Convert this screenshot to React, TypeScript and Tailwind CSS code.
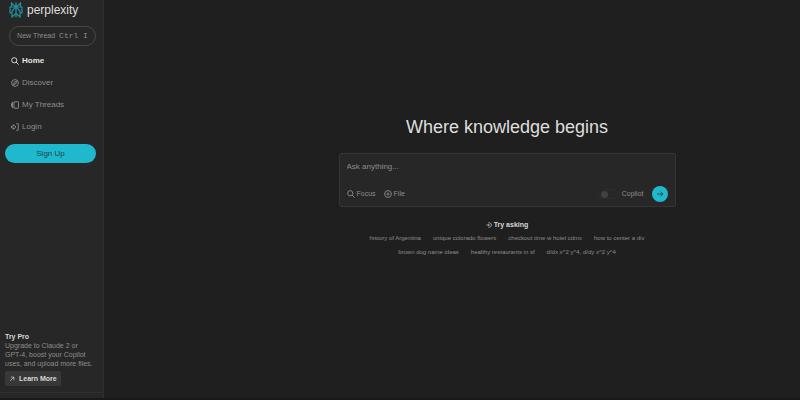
import React from 'react';

const navItems = [
  { label: 'Home', icon: 'search', active: true },
  { label: 'Discover', icon: 'compass', active: false },
  { label: 'My Threads', icon: 'threads', active: false },
  { label: 'Login', icon: 'login', active: false },
];

const suggestionRows = [
  ['history of Argentina', 'unique colorado flowers', 'checkout time w hotel cdmx', 'how to center a div'],
  ['brown dog name ideas', 'healthy restaurants in sf', 'd/dx x^2 y^4, d/dy x^2 y^4'],
];

const Icon: React.FC<{ name: string; className?: string }> = ({ name, className }) => (
  <svg
    viewBox="0 0 16 16"
    fill="none"
    stroke="currentColor"
    strokeWidth="1.8"
    className={className}
    aria-hidden="true"
  >
    {name === 'search' && (
      <>
        <circle cx="6.5" cy="6.5" r="5.2" />
        <path d="M10.2 10.2 15.2 15.2" />
      </>
    )}
    {name === 'compass' && (
      <>
        <circle cx="8" cy="8" r="6.8" />
        <path d="M11.4 4.6 9.5 9.5 4.6 11.4 6.5 6.5Z" />
      </>
    )}
    {name === 'threads' && (
      <>
        <rect x="6" y="1.5" width="9" height="13" rx="1" />
        <path d="M5 2.5H3v11h2M1 4.5v7" />
      </>
    )}
    {name === 'login' && (
      <>
        <path d="M10.5 1.5H14.5v13h-4" />
        <path d="M1 6h4V3.5L10 8l-5 4.5V10H1Z" />
      </>
    )}
    {name === 'plus' && (
      <>
        <circle cx="8" cy="8" r="6.8" />
        <path d="M8 5v6M5 8h6" />
      </>
    )}
    {name === 'ask' && (
      <>
        <path d="M6 2.5A6 6 0 1 1 6 13.5" />
        <path d="M1 8h8M6.5 5.5 9 8l-2.5 2.5" />
      </>
    )}
    {name === 'upRight' && <path d="M3 13 13 3M5 3h8v8" />}
    {name === 'right' && <path d="M2 8h12M9 3l5 5-5 5" />}
  </svg>
);

const Logo = () => (
  <svg viewBox="0 0 28 32" fill="none" stroke="#22909e" strokeWidth="2.4" className="h-4 w-3.5" aria-hidden="true">
    <path d="M14 1v30M14 10 5 2v8M14 10l9-8v8M14 10H2v12h4M14 10h12v12h-4" />
    <path d="m14 10-8 8v12l8-7M14 10l8 8v12l-8-7" />
  </svg>
);

const Sidebar = () => (
  <aside className="flex w-[104px] shrink-0 flex-col border-r border-[#303030] bg-[#272727]">
    <div className="flex flex-1 flex-col pr-[7px] pl-[5px]">
      <a href="#home" className="mt-0.5 flex items-center gap-1 pl-1 text-[#dededb]">
        <Logo />
        <span className="text-[12px] leading-4">perplexity</span>
      </a>

      <button className="mt-2 ml-1 flex h-5 items-center justify-center gap-1 rounded-full border border-[#484848] text-[7px] whitespace-nowrap text-[#8d8d8b]">
        New Thread
        <kbd className="font-['Liberation_Mono',monospace] text-[8px]">Ctrl I</kbd>
      </button>

      <nav className="mt-1 flex flex-col pl-1.5">
        {navItems.map((item) => (
          <a
            key={item.label}
            href="#"
            className={
              item.active
                ? 'flex h-[22px] items-center gap-[3px] text-[8px] font-semibold text-[#e4e4e1]'
                : 'flex h-[22px] items-center gap-[3px] text-[8px] text-[#8d8d8b]'
            }
          >
            <Icon name={item.icon} className="size-2" />
            {item.label}
          </a>
        ))}
      </nav>

      <button className="mt-1.5 h-[19px] rounded-full bg-[#20b8cd] text-[8px] text-[#17454c]">Sign Up</button>

      <section className="mt-auto pb-1.5 text-[7px] leading-[9px] text-[#8d8d8b]">
        <h2 className="font-semibold text-[#d8d8d5]">Try Pro</h2>
        <p>
          Upgrade to Claude 2 or
          <br />
          GPT-4, boost your Copilot
          <br />
          uses, and upload more files.
        </p>
        <button className="mt-[3px] flex h-[15px] items-center gap-1 rounded-xs bg-[#383838] px-1 font-semibold text-[#d8d8d5]">
          <Icon name="upRight" className="size-1.5" />
          Learn More
        </button>
      </section>
    </div>
    <div className="h-1.5 border-t border-[#303030]" />
  </aside>
);

const AskBox = () => (
  <form
    onSubmit={(e) => e.preventDefault()}
    className="mt-4 w-full max-w-[337px] rounded-xs border border-[#343434] bg-[#272727] px-[7px] pt-2 pb-1"
  >
    <input
      type="text"
      aria-label="Ask anything"
      placeholder="Ask anything..."
      className="block h-2.5 w-full bg-transparent text-[8px] text-[#dededb] outline-none placeholder:text-[#8d8d8b]"
    />
    <div className="mt-3.5 flex items-center text-[7px] text-[#8d8d8b]">
      <button type="button" className="flex items-center gap-0.5">
        <Icon name="search" className="size-2" />
        Focus
      </button>
      <button type="button" className="ml-2 flex items-center gap-0.5">
        <Icon name="plus" className="size-2" />
        File
      </button>
      <label className="ml-auto flex items-center gap-1">
        <input type="checkbox" className="peer sr-only" />
        <span className="flex h-2.5 w-5 items-center rounded-full border border-[#2d2d2d] px-0.5">
          <span className="size-[7px] rounded-full bg-[#404040]" />
        </span>
        Copilot
      </label>
      <button
        type="submit"
        aria-label="Submit"
        className="ml-2 flex size-4 items-center justify-center rounded-full bg-[#20b8cd] text-[#17454c]"
      >
        <Icon name="right" className="size-2" />
      </button>
    </div>
  </form>
);

const App: React.FC = () => {
  return (
    <div className="flex min-h-screen border-b-2 border-[#1b181a] bg-[#1f1f1f] font-['Liberation_Sans',sans-serif]">
      <Sidebar />
      <main className="flex flex-1 flex-col items-center justify-center pb-[22px] pl-[110px]">
        <h1 className="text-[18px] leading-5 text-[#dededb]">Where knowledge begins</h1>
        <AskBox />
        <h2 className="mt-3 flex items-center gap-0.5 text-[7px] leading-3 font-semibold text-[#d8d8d5]">
          <Icon name="ask" className="size-1.5" />
          Try asking
        </h2>
        {suggestionRows.map((row) => (
          <div key={row[0]} className="flex h-3.5 items-center gap-3">
            {row.map((text) => (
              <button key={text} className="text-[6px] whitespace-nowrap text-[#8d8d8b]">
                {text}
              </button>
            ))}
          </div>
        ))}
      </main>
    </div>
  );
};

export default App;
